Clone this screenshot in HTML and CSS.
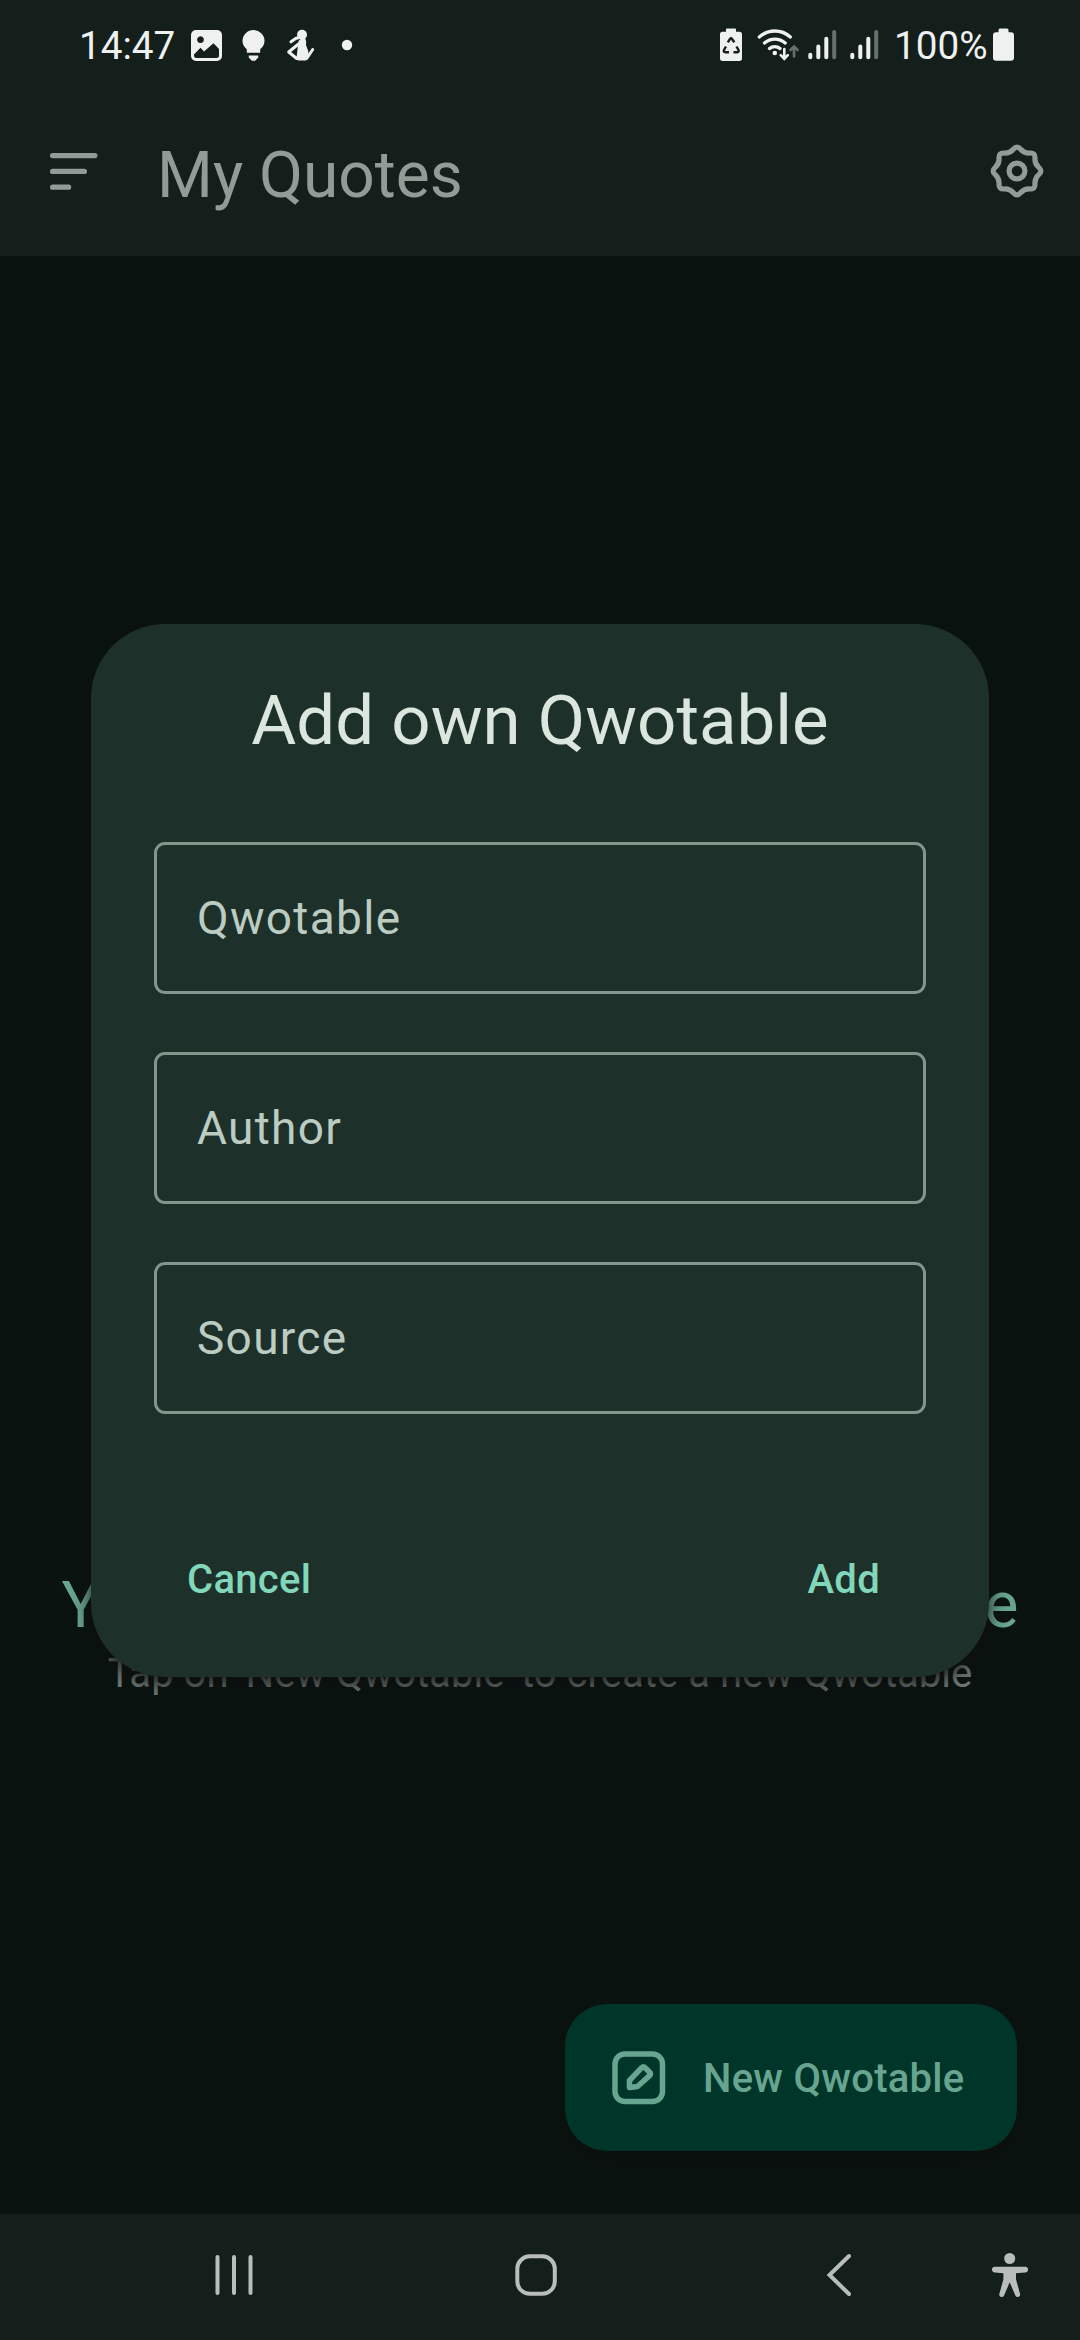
FILE: index.html
```html
<!DOCTYPE html>
<html lang="en">
<head>
<meta charset="utf-8">
<title>My Quotes</title>
<link rel="stylesheet" href="styles.css">
</head>
<body>
<div class="screen">
  <header class="top">
    <div class="status">
      <span class="clock">14:47</span>
      <svg class="status-left" width="162" height="40" viewBox="191 26 162 40">
        <path fill-rule="evenodd" d="M196 30h21a5 5 0 0 1 5 5v21a5 5 0 0 1-5 5h-21a5 5 0 0 1-5-5v-21a5 5 0 0 1 5-5zM194 54.5v1a2.500 2.500 0 0 0 2.500 2.500h20a2.500 2.500 0 0 0 2.500-2.500v-6.500l-5.500-5.800-9.500 8.300-3.500-3.800zM200.500 36.300a3.400 3.400 0 1 0 .01 0z"/>
        <path d="M253.500 30a11 11 0 0 0-11 11c0 4 2.300 6.500 4.300 8.300v3.400h13.400v-3.400c2-1.800 4.300-4.300 4.300-8.300a11 11 0 0 0-11-11z"/>
        <path d="M248.800 55.500h9.400v2l-3 3.200h-3.400l-3-3.200z"/>
        <circle cx="302" cy="34.800" r="5"/>
        <path d="M298.500 41q2-2 4-3h2.500q2 3 1 7l2.200 6q.8 5-2.200 9.500h-8l-1.500-2.500z"/>
        <path fill="none" stroke="#eef1f0" stroke-width="3" stroke-linecap="round" stroke-linejoin="round" d="M300 37.500l-4 .8-5 3.500M298.500 44l-9.800 8 8 6.500h10l6-9"/>
        <circle cx="347" cy="45" r="5.200"/>
      </svg>
      <svg class="status-right" width="159" height="40" viewBox="720 26 159 40">
        <path d="M727 28.500h8q1 0 1 1v2.300h3.500q2.500 0 2.500 2.500v24q0 2.700-2.500 2.700h-17q-2.500 0-2.500-2.700v-24q0-2.500 2.500-2.500h3.500v-2.300q0-1 1-1z"/>
        <path class="cut-line" d="M727.800 42.300l2.200-3.300q1-1.400 2 0l2.400 3.300M736.500 46.500l2 3.500q.8 2-1.400 2.300h-3.600M729 52.300h-3.500q-2.500-.3-1.500-2.300l2-3.500"/>
        <g class="lines">
          <path d="M759.300 37a23 23 0 0 1 31 0M764.500 43a15.500 15.500 0 0 1 20.700 0M769.500 48.500a8 8 0 0 1 10.500 0" stroke-width="3.300"/>
          <path d="M784.300 49v9M780.800 55.200l3.500 3.700 3.500-3.700" stroke-width="2.600"/>
          <path class="dim" d="M794 56.500v-9.500M790.500 50l3.500-3.500 3.500 3.500" stroke-width="2.600"/>
          <path d="M810.300 54.800v2.400M818.300 46.500v10.700M826.300 38.800v18.400M852.300 54.800v2.400M860.300 46.500v10.700M868.300 38.800v18.400" stroke-width="4"/>
          <path class="dim" d="M834.200 32v25.200M876.200 32v25.200" stroke-width="4"/>
        </g>
        <circle cx="774.800" cy="53" r="2.300"/>
      </svg>
      <span class="percent">100%</span>
      <svg class="battery" width="22" height="40" viewBox="993 26 22 40">
        <path d="M1000 28.500h7q1.500 0 1.500 1.500v2.300h2.500q3 0 3 3v22.500q0 3-3 3h-15q-3 0-3-3v-22.500q0-3 3-3h2.500v-2.300q0-1.500 1.500-1.500z"/>
      </svg>
    </div>
    <div class="appbar">
      <svg class="menu" width="48" height="38" viewBox="0 0 48 38"><path d="M2.600 2.600h42.300M2.600 18.400h31.800M2.600 34.200h16"/></svg>
      <h1 class="title">My Quotes</h1>
      <svg class="gear" width="54" height="54" viewBox="-27 -27 54 54">
        <path d="M21.780-3.640Q26 0 21.780 3.640T17.970 12.830T12.830 17.970T3.640 21.780T-3.640 21.780T-12.830 17.970T-17.970 12.830T-21.780 3.640T-21.780-3.640T-17.970-12.830T-12.830-17.970T-3.640-21.780T3.640-21.780T12.830-17.970T17.970-12.830T21.780-3.640Z"/>
        <circle r="7.900"/>
      </svg>
    </div>
  </header>
  <main class="content">
    <h2 class="empty-title">Your own Qwotables appear here</h2>
    <p class="empty-text">Tap on 'New Qwotable' to create a new Qwotable</p>
    <button class="fab">
      <svg width="54" height="54" viewBox="0 0 54 54">
        <rect x="3" y="3" width="47.500" height="47.500" rx="10"/>
        <path d="M17.500 29.500L29.700 16.700q1.700-1.600 3.400 0l4.500 4.500q1.600 1.700 0 3.400L25.500 35.500l-7.500 1q-.6 0-.6-.6z"/>
      </svg>
      <span class="fab-label">New Qwotable</span>
    </button>
  </main>
  <nav class="nav">
    <svg class="recents" width="40" height="42" viewBox="214 2254 40 42"><path d="M217.500 2257v36M234 2257v36M250.500 2257v36"/></svg>
    <svg class="home" width="44" height="44" viewBox="514 2253 44 44"><rect x="517.300" y="2256.300" width="37.500" height="37.500" rx="12.500"/></svg>
    <svg class="back" width="28" height="46" viewBox="826 2252 28 46"><path d="M849 2256l-19.500 19 19.500 19"/></svg>
    <svg class="access" width="38" height="46" viewBox="991 2254 38 46">
      <circle cx="1009.700" cy="2260.500" r="5.500"/>
      <path d="M994.800 2268.800h30.400a2.800 2.800 0 0 1 0 5.600l-9.200.8v6l4 14.500a2.500 2.500 0 0 1-4.800 1.600l-5.500-13-5.500 13a2.500 2.500 0 0 1-4.800-1.600l4-14.500v-6l-8.600-.8a2.800 2.800 0 0 1 0-5.600z"/>
    </svg>
  </nav>
  <section class="dialog">
    <h2 class="dialog-title">Add own Qwotable</h2>
    <div class="fields">
      <div class="field">Qwotable</div>
      <div class="field">Author</div>
      <div class="field">Source</div>
    </div>
    <div class="actions"><span>Cancel</span><span>Add</span></div>
  </section>
</div>
</body>
</html>
```
FILE: styles.css
```css
* { box-sizing: border-box; }
body { margin: 0; font-family: Roboto, "Noto Sans", sans-serif; }
h1, h2, p { margin: 0; font-weight: 400; white-space: nowrap; }
svg { display: block; flex: none; }
.screen {
  position: relative;
  display: flex;
  flex-direction: column;
  width: 1080px;
  height: 2340px;
  overflow: hidden;
  background: #0a1310;
}
.top { height: 256px; background: #141f1b; }
.status {
  display: flex;
  align-items: center;
  height: 92px;
  padding: 0 65px 0 79px;
  color: #eef1f0;
  fill: #eef1f0;
  font-size: 38.7px;
}
.clock { width: 112px; line-height: 88px; }
.status-right { margin-left: auto; }
.percent { width: 98px; margin-left: 15px; line-height: 88px; white-space: nowrap; }
.battery { margin-left: 1px; }
.cut-line { fill: none; stroke: #141f1b; stroke-width: 2.4; }
.lines { fill: none; stroke: #eef1f0; stroke-linecap: round; }
.dim { stroke: #66706c; }
.appbar {
  display: flex;
  align-items: center;
  height: 157px;
  padding: 0 36px 0 50px;
  color: #929c97;
}
.menu, .gear { fill: none; stroke: #929c97; stroke-width: 5.2; stroke-linecap: round; }
.menu { margin-top: 2px; }
.title { flex: 1; margin: 10px 0 0 59px; font-size: 64px; line-height: 80px; }
.content {
  display: flex;
  flex-direction: column;
  align-items: center;
  height: 1958px;
  padding: 1310px 63px 63px;
}
.empty-title {
  width: 957px;
  color: #68a590;
  font-size: 64px;
  line-height: 80px;
  text-align-last: justify;
}
.empty-text {
  margin-top: 2px;
  color: #6f7874;
  font-size: 40.1px;
  line-height: 52px;
}
.fab {
  display: flex;
  align-items: center;
  gap: 37px;
  width: 452px;
  height: 147px;
  margin: auto 0 0 auto;
  padding: 0 0 0 47px;
  border: 0;
  border-radius: 42px;
  background: #003629;
  box-shadow: 0 10px 16px rgba(12, 15, 13, .8);
  color: #68a590;
  font: 500 40px/52px Roboto, sans-serif;
  letter-spacing: .26px;
  white-space: nowrap;
}
.fab-label { padding-top: 3px; }
.fab svg { fill: none; stroke: #68a590; stroke-width: 5.5; stroke-linejoin: round; }
.nav {
  display: flex;
  align-items: center;
  height: 126px;
  padding: 0 51px 4px 214px;
  background: #141f1b;
  fill: none;
  stroke: #b9bdbb;
  stroke-width: 4;
  stroke-linecap: round;
}
.home { margin-left: 260px; }
.back { margin-left: 268px; }
.access { margin-left: auto; fill: #b9bdbb; stroke: none; }
.dialog {
  position: absolute;
  top: 624px;
  left: 91px;
  width: 898px;
  height: 1053px;
  padding: 51px 63px 0;
  border-radius: 74px;
  background: #1e302a;
  box-shadow: 0 6px 18px rgba(13, 16, 14, .9);
}
.dialog-title {
  color: #dae6de;
  font-size: 69px;
  line-height: 92px;
  text-align: center;
}
.fields { display: grid; gap: 58px; margin-top: 75px; }
.field {
  height: 152px;
  padding-left: 40px;
  border: 3px solid #82968c;
  border-radius: 11px;
  color: #bbccc3;
  font-size: 46px;
  letter-spacing: 1.3px;
  line-height: 146px;
}
.actions {
  display: flex;
  justify-content: space-between;
  margin-top: 139px;
  padding: 0 46px 0 33px;
  color: #82d7bb;
  font-size: 40px;
  font-weight: 500;
  letter-spacing: .3px;
  line-height: 54px;
}
```
